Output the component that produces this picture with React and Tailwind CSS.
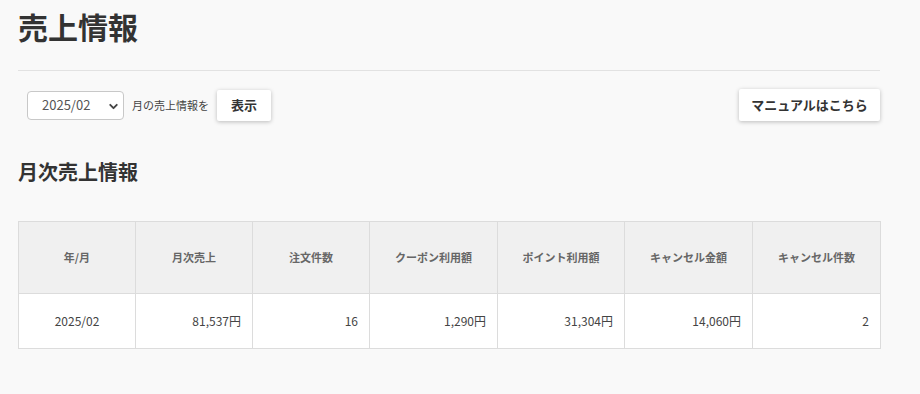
import { ChevronDown } from 'lucide-react';

const FONT = { fontFamily: '"Noto Sans CJK JP", "Noto Sans", sans-serif' };

const COLUMNS = [
  { label: '年/月', width: 'w-[117px]', value: '2025/02', align: 'text-center' },
  { label: '月次売上', width: 'w-[117px]', value: '81,537円', align: 'text-right' },
  { label: '注文件数', width: 'w-[117px]', value: '16', align: 'text-right' },
  { label: 'クーポン利用額', width: 'w-[128px]', value: '1,290円', align: 'text-right' },
  { label: 'ポイント利用額', width: 'w-[127px]', value: '31,304円', align: 'text-right' },
  { label: 'キャンセル金額', width: 'w-[128px]', value: '14,060円', align: 'text-right' },
  { label: 'キャンセル件数', width: 'w-[128px]', value: '2', align: 'text-right' },
];

export default function App() {
  return (
    <div className="min-h-[394px] w-[920px] bg-[#f9f9f9] text-[#333]" style={FONT}>
      <div className="w-[862px] ml-[18px] pt-[5px]">
        <h1 className="text-[30px] font-bold leading-[42px] text-[#333]">売上情報</h1>

        <div className="mt-[23px] border-t border-[#e2e2e2]" />

        {/* filter row */}
        <div className="mt-[18px] flex items-center justify-between">
          <div className="flex items-center">
            <div className="ml-[9px] relative w-[97px] h-[29px] rounded-[4px] border border-[#c8c8c8] bg-white flex items-center">
              <span className="pl-[14px] text-[13px] text-[#555]">2025/02</span>
              <ChevronDown className="absolute right-[3px] top-[8px] text-[#444]" size={13} strokeWidth={3.5} />
            </div>
            <span className="ml-[8px] text-[11px] text-[#444]">月の売上情報を</span>
            <button className="ml-[8px] w-[54px] h-[31px] bg-white rounded-[2px] shadow-[0_1px_4px_rgba(0,0,0,0.25)] text-[13px] font-bold text-[#333]">
              表示
            </button>
          </div>
          <button className="w-[141px] h-[32px] bg-white rounded-[2px] shadow-[0_1px_4px_rgba(0,0,0,0.25)] text-[13px] font-bold text-[#333]">
            マニュアルはこちら
          </button>
        </div>

        <h2 className="mt-[37px] text-[20px] font-bold leading-[28px] text-[#333]">月次売上情報</h2>

        {/* table */}
        <table className="mt-[35px] w-[862px] border-collapse table-fixed">
          <thead>
            <tr className="h-[72px] bg-[#f0f0f0]">
              {COLUMNS.map((c) => (
                <th
                  key={c.label}
                  className={`${c.width} border border-[#dcdcdc] text-center text-[11px] font-bold text-[#666]`}
                >
                  {c.label}
                </th>
              ))}
            </tr>
          </thead>
          <tbody>
            <tr className="h-[55px] bg-white">
              {COLUMNS.map((c) => (
                <td
                  key={c.label}
                  className={`border border-[#dcdcdc] px-[11px] text-[12px] text-[#444] ${c.align}`}
                >
                  {c.value}
                </td>
              ))}
            </tr>
          </tbody>
        </table>
      </div>
    </div>
  );
}
